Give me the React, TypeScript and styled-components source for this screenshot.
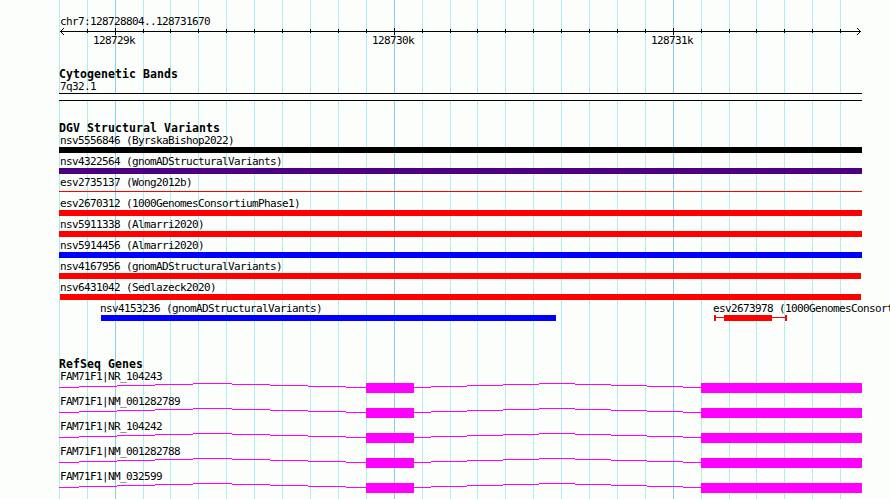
import styled, { createGlobalStyle } from "styled-components";

const GlobalStyle = createGlobalStyle`
  body {
    margin: 0;
    background: #fcfefc;
    overflow: hidden;
  }
`;

const Viewer = styled.main`
  position: relative;
  box-sizing: border-box;
  width: 890px;
  height: 499px;
  padding: 15px 0 0 59px;
  overflow: hidden;
  background: #fcfefc;
  color: #000;
  font-family: "DejaVu Sans Mono", "Liberation Mono", monospace;
  font-size: 11px;
  line-height: 13px;
  letter-spacing: -0.622px;
  white-space: pre;
`;

const GridLines = styled.svg`
  position: absolute;
  inset: 0;
`;

const Drawing = styled.svg`
  display: block;
  overflow: visible;
  shape-rendering: crispEdges;
`;

const Section = styled.section<{ $gap?: number }>`
  position: relative;
  display: flex;
  flex-direction: column;
  margin-top: ${({ $gap = 0 }) => $gap}px;
`;

const Heading = styled.h2`
  margin: 0;
  height: 12px;
  font-size: 11.5px;
  font-weight: bold;
  letter-spacing: 0.077px;
`;

const Label = styled.div<{ $indent?: number }>`
  height: 13px;
  margin-left: ${({ $indent = 1 }) => $indent}px;
`;

const Scale = styled.div`
  display: flex;
  gap: 237px;
  padding-left: 34px;

  span {
    width: 42px;
  }
`;

const Band = styled.div`
  box-sizing: border-box;
  width: 803px;
  height: 8px;
  border: solid #000;
  border-width: 1px 0;
  background: #fff;
`;

const Lane = styled.div<{ $height: number }>`
  display: flex;
  height: ${({ $height }) => $height}px;
`;

const Feature = styled.div<{ $gap?: number; $width: number }>`
  flex: none;
  width: ${({ $width }) => $width}px;
  margin-left: ${({ $gap = 0 }) => $gap}px;
`;

const Bar = styled.div<{ $color: string; $thin?: boolean }>`
  height: ${({ $thin }) => ($thin ? 1 : 6)}px;
  margin-top: ${({ $thin }) => ($thin ? 2 : 0)}px;
  background: ${({ $color }) => $color};
`;

const LEFT = 59;

const ticks = [
  59, 87, 115, 143, 170, 198, 226, 254, 282, 310, 338, 366, 394, 422, 450, 477,
  505, 533, 561, 589, 617, 645, 673, 701, 729, 756, 784, 812, 840,
];
const majorTicks = [115, 394, 673];

type Variant = {
  name: string;
  color: string;
  gap?: number;
  width?: number;
  thin?: boolean;
};

const variants: Variant[] = [
  { name: "nsv5556846 (ByrskaBishop2022)", color: "#000" },
  { name: "nsv4322564 (gnomADStructuralVariants)", color: "#4b0082" },
  { name: "esv2735137 (Wong2012b)", color: "#f00", thin: true },
  { name: "esv2670312 (1000GenomesConsortiumPhase1)", color: "#f00" },
  { name: "nsv5911338 (Almarri2020)", color: "#f00" },
  { name: "nsv5914456 (Almarri2020)", color: "#00f" },
  { name: "nsv4167956 (gnomADStructuralVariants)", color: "#f00", width: 802 },
  { name: "nsv6431042 (Sedlazeck2020)", color: "#f00", gap: 1, width: 801 },
];

const genes = [
  "FAM71F1|NR_104243",
  "FAM71F1|NM_001282789",
  "FAM71F1|NR_104242",
  "FAM71F1|NM_001282788",
  "FAM71F1|NM_032599",
];

// x breakpoints of each intron; every step moves the line by one pixel
const introns = [
  [59, 79, 117, 155, 193, 232, 270, 308, 346, 366],
  [414, 431, 467, 503, 539, 575, 611, 647, 683, 701],
];
const intronRise = [4, 3, 2, 1, 0, 1, 2, 3, 4];

function Grid() {
  return (
    <GridLines width="890" height="499" shapeRendering="crispEdges">
      {ticks.map((x) => (
        <rect
          key={x}
          x={x}
          width="1"
          height="499"
          fill={majorTicks.includes(x) ? "#87ceeb" : "#afeeee"}
        />
      ))}
    </GridLines>
  );
}

function Axis() {
  return (
    <Drawing width="803" height="6">
      <rect x="1" y="3" width="801" height="1" />
      {[0, 1, 2, 3].map((i) => (
        <g key={i}>
          <rect x={1 + i} y={3 - i} width="1" height="1" />
          <rect x={1 + i} y={3 + i} width="1" height="1" />
          <rect x={801 - i} y={3 - i} width="1" height="1" />
          <rect x={801 - i} y={3 + i} width="1" height="1" />
        </g>
      ))}
      {ticks.slice(1).map((x) => {
        const major = majorTicks.includes(x);
        return (
          <rect
            key={x}
            x={x - LEFT}
            y={major ? 0 : 1}
            width="1"
            height={major ? 7 : 4}
          />
        );
      })}
    </Drawing>
  );
}

function Gene() {
  return (
    <Drawing width="803" height="10" fill="#f0f">
      {introns.map((stops) =>
        intronRise.map((y, i) => (
          <rect
            key={stops[i]}
            x={stops[i] - LEFT}
            y={y}
            width={stops[i + 1] - stops[i]}
            height="1"
          />
        ))
      )}
      <rect x="307" width="48" height="10" />
      <rect x="642" width="161" height="10" />
    </Drawing>
  );
}

export default function App() {
  return (
    <Viewer>
      <GlobalStyle />
      <Grid />

      <Section>
        <Label>chr7:128728804..128731670</Label>
        <Axis />
        <Scale>
          <span>128729k</span>
          <span>128730k</span>
          <span>128731k</span>
        </Scale>
      </Section>

      <Section $gap={21}>
        <Heading>Cytogenetic Bands</Heading>
        <Label>7q32.1</Label>
        <Band />
      </Section>

      <Section $gap={21}>
        <Heading>DGV Structural Variants</Heading>
        {variants.map(({ name, color, gap = 0, width = 803, thin }) => (
          <Lane key={name} $height={21}>
            <Feature $gap={gap} $width={width}>
              <Label $indent={1 - gap}>{name}</Label>
              <Bar $color={color} $thin={thin} />
            </Feature>
          </Lane>
        ))}
        <Lane $height={21}>
          <Feature $gap={42} $width={455}>
            <Label $indent={-1}>nsv4153236 (gnomADStructuralVariants)</Label>
            <Bar $color="#00f" />
          </Feature>
          <Feature $gap={157} $width={75}>
            <Label $indent={0}>esv2673978 (1000GenomesConsortiumPhase1)</Label>
            <Drawing width="75" height="6" fill="#f00">
              <rect x="1" width="2" height="6" />
              <rect x="3" y="2" width="69" height="1" />
              <rect x="11" width="48" height="6" />
              <rect x="72" width="2" height="6" />
            </Drawing>
          </Feature>
        </Lane>
      </Section>

      <Section $gap={35}>
        <Heading>RefSeq Genes</Heading>
        {genes.map((name) => (
          <Lane key={name} $height={25}>
            <Feature $width={803}>
              <Label>{name}</Label>
              <Gene />
            </Feature>
          </Lane>
        ))}
      </Section>
    </Viewer>
  );
}
